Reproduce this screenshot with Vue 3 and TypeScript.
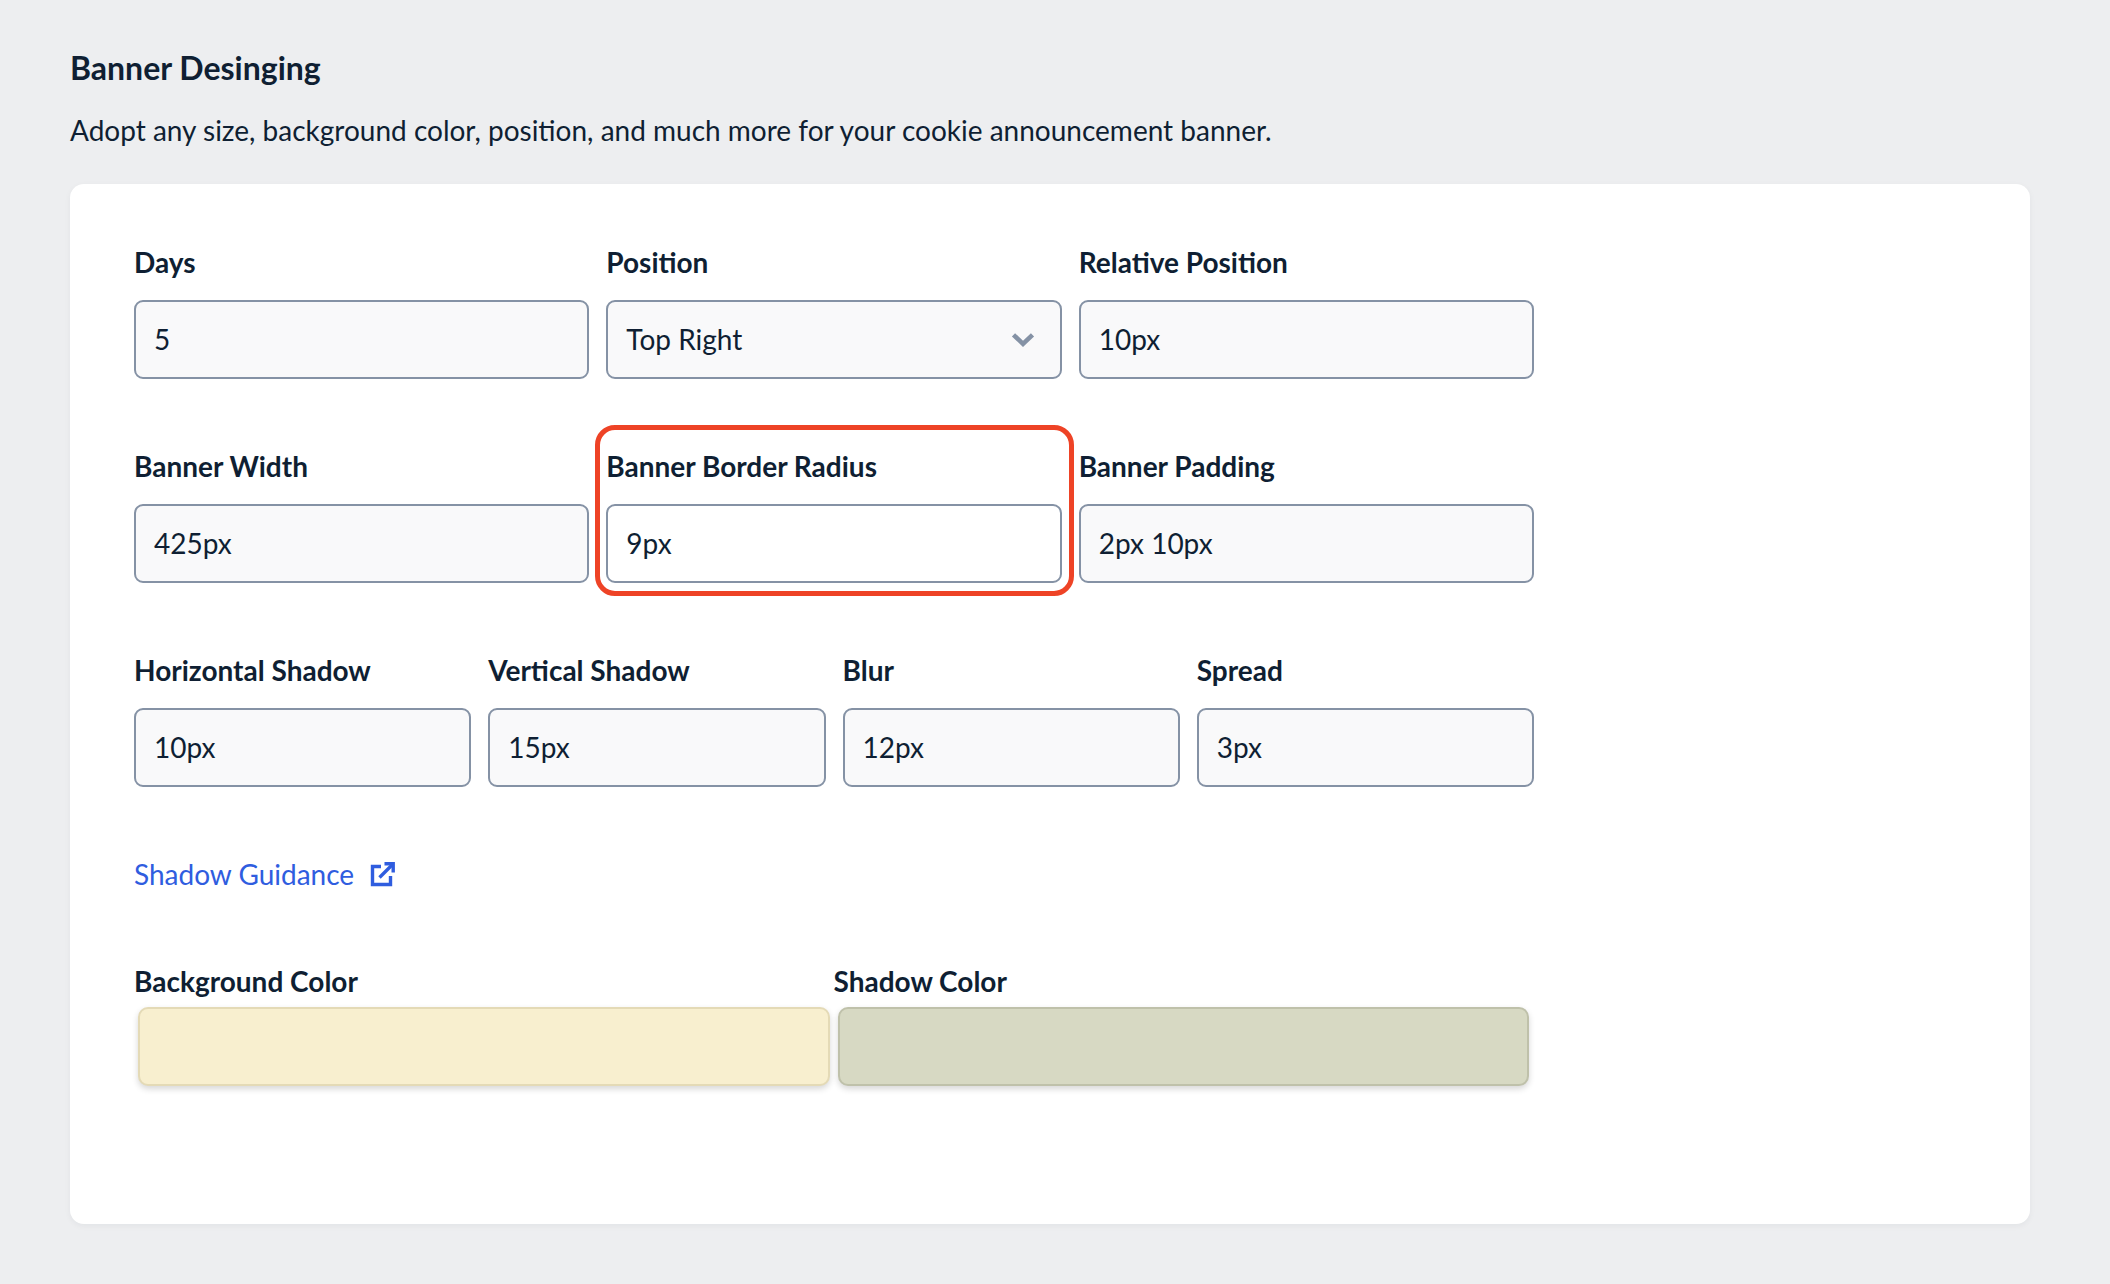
<script setup lang="ts">
interface Field { label: string; value: string; select?: boolean; highlighted?: boolean }

const topRows: Field[][] = [
  [
    { label: 'Days', value: '5' },
    { label: 'Position', value: 'Top Right', select: true },
    { label: 'Relative Position', value: '10px' },
  ],
  [
    { label: 'Banner Width', value: '425px' },
    { label: 'Banner Border Radius', value: '9px', highlighted: true },
    { label: 'Banner Padding', value: '2px 10px' },
  ],
]
const shadowRow: Field[] = [
  { label: 'Horizontal Shadow', value: '10px' },
  { label: 'Vertical Shadow', value: '15px' },
  { label: 'Blur', value: '12px' },
  { label: 'Spread', value: '3px' },
]
const colors = [
  { label: 'Background Color', cls: 'cream' },
  { label: 'Shadow Color', cls: 'sage' },
]
</script>

<template>
  <main class="page">
    <h1 class="title">Banner Desinging</h1>
    <p class="desc">Adopt any size, background color, position, and much more for your cookie announcement banner.</p>
    <section class="card">
      <div class="form">
        <div v-for="(row, i) in topRows" :key="i" class="grid three">
          <div v-for="f in row" :key="f.label" class="field" :class="{ marked: f.highlighted }">
            <div class="label">{{ f.label }}</div>
            <div class="input" :class="{ white: f.highlighted }">
              <span>{{ f.value }}</span>
              <svg v-if="f.select" class="chev" width="24" height="15" viewBox="0 0 24 15" fill="none">
                <path d="M2.5 2.8l9.5 9 9.5-9" stroke="#8592a5" stroke-width="4.6" />
              </svg>
            </div>
          </div>
        </div>
        <div class="grid four">
          <div v-for="f in shadowRow" :key="f.label" class="field">
            <div class="label">{{ f.label }}</div>
            <div class="input"><span>{{ f.value }}</span></div>
          </div>
        </div>
        <a class="link" href="#">
          <span>Shadow Guidance</span>
          <svg width="25" height="25" viewBox="0 0 25 25" fill="none" stroke="#2f5ddf" stroke-width="3.4">
            <path d="M11 4.5H2.5v18h18V14" />
            <path d="M9.5 15.5L22 3" />
            <path d="M14.5 1.8h8.7v8.7" />
          </svg>
        </a>
        <div class="colors">
          <div v-for="c in colors" :key="c.label">
            <div class="label tight">{{ c.label }}</div>
            <div class="swatch" :class="c.cls"></div>
          </div>
        </div>
      </div>
    </section>
  </main>
</template>

<style scoped>
.page {
  box-sizing: border-box;
  width: 2110px;
  height: 1284px;
  padding: 47px 80px 60px 70px;
  background: #edeef0;
  font-family: Lato, "Liberation Sans", sans-serif;
  color: #0f1f33;
  overflow: hidden;
}
.title {
  margin: 0;
  font-size: 32px;
  line-height: 42px;
  font-weight: 700;
}
.desc {
  margin: 20px 0 0;
  font-size: 28px;
  line-height: 42px;
  font-weight: 400;
}
.card {
  box-sizing: border-box;
  height: 1040px;
  margin-top: 33px;
  padding: 60px 64px;
  background: #fff;
  border-radius: 14px;
  box-shadow: 0 2px 6px rgba(20, 30, 50, 0.05);
}
.form {
  width: 1400px;
}
.grid {
  display: grid;
  column-gap: 17px;
  margin-bottom: 69px;
}
.three {
  grid-template-columns: repeat(3, 1fr);
}
.four {
  grid-template-columns: repeat(4, 1fr);
}
.field {
  position: relative;
}
.marked::after {
  content: "";
  position: absolute;
  inset: -23px -12px -13px -11px;
  border: 5px solid #ee4326;
  border-radius: 20px;
  pointer-events: none;
}
.label {
  height: 36px;
  margin-bottom: 20px;
  font-size: 28px;
  line-height: 36px;
  font-weight: 700;
  white-space: nowrap;
}
.label.tight {
  margin-bottom: 8px;
}
.input {
  box-sizing: border-box;
  display: flex;
  align-items: center;
  justify-content: space-between;
  height: 79px;
  padding: 0 18px 2px;
  background: #f9f9fa;
  border: 2px solid #8592a5;
  border-radius: 9px;
  font-size: 28px;
}
.input.white {
  background: #fff;
}
.chev {
  margin-right: 7px;
  margin-top: 2px;
}
.link {
  display: flex;
  align-items: center;
  gap: 16px;
  width: max-content;
  height: 42px;
  margin-top: -3px;
  color: #2f5ddf;
  font-size: 28px;
  text-decoration: none;
}
.colors {
  display: grid;
  grid-template-columns: repeat(2, 699.5px);
  margin-top: 68px;
}
.swatch {
  box-sizing: border-box;
  height: 79px;
  margin: 0 4px;
  border-radius: 10px;
  border: 2px solid;
  box-shadow: 0 3px 6px rgba(0, 0, 0, 0.16);
}
.cream {
  background: #f8efcf;
  border-color: #e4dab6;
}
.sage {
  background: #d7d9c3;
  border-color: #bfc1aa;
}
</style>
